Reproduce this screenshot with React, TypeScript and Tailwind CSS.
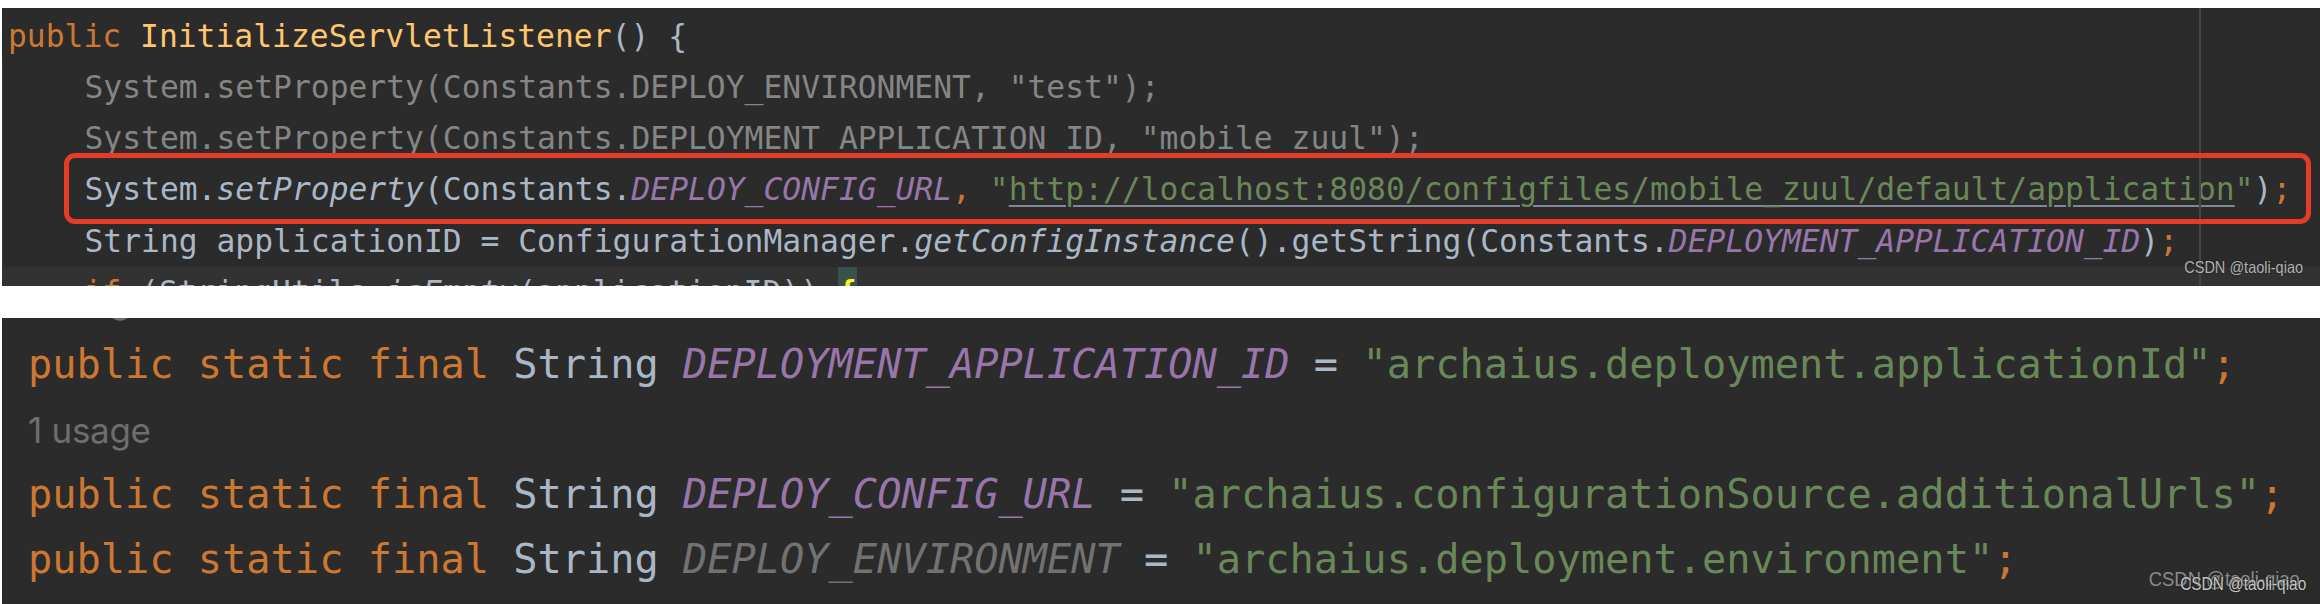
import React from "react";

const K = ({ children }: { children: React.ReactNode }) => <span className="text-[#cc7832]">{children}</span>;
const S = ({ children }: { children: React.ReactNode }) => <span className="text-[#6a8759]">{children}</span>;
const C = ({ children }: { children: React.ReactNode }) => <span className="italic text-[#9876aa]">{children}</span>;
const I = ({ children }: { children: React.ReactNode }) => <span className="italic">{children}</span>;

function TopLine({ children, className = "" }: { children: React.ReactNode; className?: string }) {
  return <div className={"h-[51.25px] pl-[6px] leading-[51.25px] whitespace-pre " + className}>{children}</div>;
}

function BottomLine({ children }: { children: React.ReactNode }) {
  return <div className="h-[65px] leading-[65px] whitespace-pre">{children}</div>;
}

function Usage() {
  return (
    <div className="h-[65px] leading-[65px] whitespace-pre">
      <span className="font-['Inter',sans-serif] text-[35px] leading-none tracking-[-0.3px] text-[#6e6e6e]">1 usage</span>
    </div>
  );
}

export default function App() {
  return (
    <div className="h-[604px] w-[2320px] overflow-hidden bg-white pt-[8px]">
      {/* Top editor panel */}
      <div className="relative ml-[2px] h-[278px] overflow-hidden bg-[#2b2b2b] font-['DejaVu_Sans_Mono','Liberation_Mono',monospace] text-[31.34px] text-[#a9b7c6]">
        <div className="pt-[2.5px]">
          <TopLine>
            <K>public</K>
            <span className="text-[#ffc66d]"> InitializeServletListener</span>
            {"() {"}
          </TopLine>
          <div className="border-l border-[#3a3a3a]">
            <TopLine className="text-[#858585]">{'    System.setProperty(Constants.DEPLOY_ENVIRONMENT, "test");'}</TopLine>
            <TopLine className="text-[#858585]">{'    System.setProperty(Constants.DEPLOYMENT_APPLICATION_ID, "mobile_zuul");'}</TopLine>
            <TopLine>
              {"    System."}
              <I>setProperty</I>
              {"(Constants."}
              <C>DEPLOY_CONFIG_URL</C>
              <K>,</K>
              <S>
                {' "'}
                <span className="underline decoration-[#7f8896] decoration-[1.5px] underline-offset-[5px]">
                  http://localhost:8080/configfiles/mobile_zuul/default/application
                </span>
                {'"'}
              </S>
              {")"}
              <K>;</K>
            </TopLine>
            <TopLine>
              {"    String applicationID = ConfigurationManager."}
              <I>getConfigInstance</I>
              {"().getString(Constants."}
              <C>DEPLOYMENT_APPLICATION_ID</C>
              {")"}
              <K>;</K>
            </TopLine>
          </div>
          <TopLine className="bg-[#323232]">
            {"    "}
            <K>if</K>
            {" (StringUtils."}
            <I>isEmpty</I>
            {"(applicationID)) "}
            <span className="inline-block h-[51.25px] bg-[#3b514d] align-top font-bold text-[#ffef28]">{"{"}</span>
          </TopLine>
        </div>

        {/* right margin guide */}
        <div className="absolute top-0 bottom-0 left-[2197px] w-[2px] bg-[#474747]" />

        {/* red annotation box */}
        <div className="absolute top-[145px] left-[62px] h-[71px] w-[2247px] rounded-[11px] border-[5px] border-[#e63b27]" />

        {/* watermark */}
        <div className="absolute top-[251px] right-[17px] origin-right scale-x-[0.88] font-['Liberation_Sans',sans-serif] text-[16.5px] leading-none whitespace-nowrap text-[#b0b0b0] [text-shadow:0_0_2px_#1e1e1e]">
          CSDN @taoli-qiao
        </div>
      </div>

      {/* Bottom editor panel */}
      <div className="relative mt-[32px] ml-[2px] h-[286px] overflow-hidden bg-[#2b2b2b] font-['DejaVu_Sans_Mono','Liberation_Mono',monospace] text-[40.3px] text-[#a9b7c6]">
        <div className="mt-[-51.5px] pl-[26px]">
          <Usage />
          <BottomLine>
            <K>{"public static final "}</K>
            {"String "}
            <C>DEPLOYMENT_APPLICATION_ID</C>
            {" = "}
            <S>"archaius.deployment.applicationId"</S>
            <K>;</K>
          </BottomLine>
          <Usage />
          <BottomLine>
            <K>{"public static final "}</K>
            {"String "}
            <C>DEPLOY_CONFIG_URL</C>
            {" = "}
            <S>"archaius.configurationSource.additionalUrls"</S>
            <K>;</K>
          </BottomLine>
          <BottomLine>
            <K>{"public static final "}</K>
            {"String "}
            <span className="italic text-[#727272]">DEPLOY_ENVIRONMENT</span>
            {" = "}
            <S>"archaius.deployment.environment"</S>
            <K>;</K>
          </BottomLine>
        </div>

        {/* watermarks */}
        <div className="absolute top-[250px] right-[20px] origin-right scale-x-[0.88] font-['Liberation_Sans',sans-serif] text-[21px] leading-none whitespace-nowrap text-[#8a8a8a]">
          CSDN @taoli-qiao
        </div>
        <div className="absolute top-[258px] right-[14px] origin-right scale-x-[0.88] font-['Liberation_Sans',sans-serif] text-[17.5px] leading-none whitespace-nowrap text-[#c4c4c4] [text-shadow:0_0_2px_#151515]">
          CSDN @taoli-qiao
        </div>
      </div>
    </div>
  );
}
